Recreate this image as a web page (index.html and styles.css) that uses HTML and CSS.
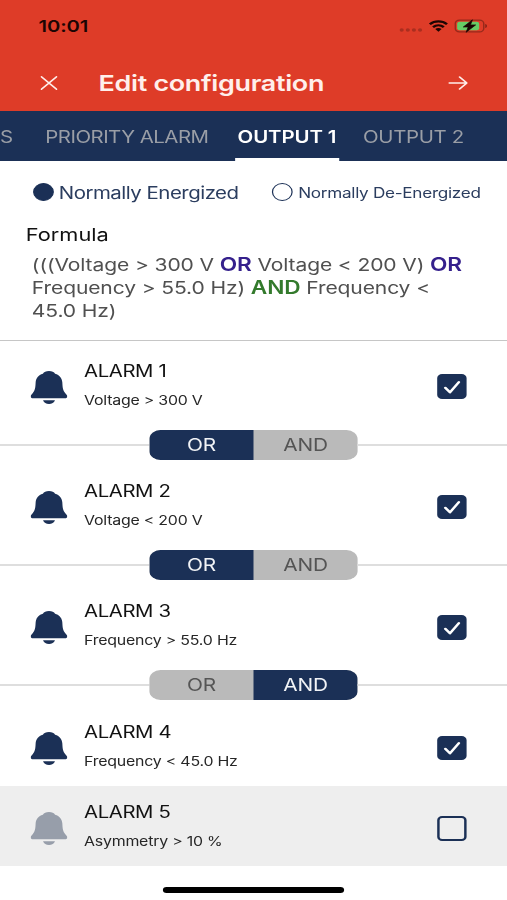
FILE: index.html
```html
<!DOCTYPE html>
<html lang="en">
<head>
<meta charset="utf-8">
<title>Edit configuration</title>
<link rel="stylesheet" href="styles.css">
</head>
<body>
<svg width="0" height="0" class="defs" aria-hidden="true">
  <symbol id="bell" viewBox="0 0 30 33">
    <path d="M15 0C12.600 0 10.900 1 10 2.700C6.400 4 4.300 7 4.100 11.500C3.900 16.500 3.700 19.500 1.500 22.500C.4 24 0 24.600 0 25.500C0 26.700.8 27.300 2 27.300H28C29.200 27.300 30 26.700 30 25.500C30 24.600 29.600 24 28.500 22.500C26.300 19.500 26.100 16.500 25.900 11.500C25.700 7 23.600 4 20 2.700C19.100 1 17.400 0 15 0Z"/>
    <path d="M10.100 29.300H19.900C19 31.800 17.400 33 15 33C12.600 33 11 31.800 10.100 29.300Z"/>
  </symbol>
  <symbol id="tick" viewBox="0 0 24 24">
    <path d="M6.600 12.800L10.400 17.300L17.700 7.200" fill="none" stroke="#fff" stroke-width="2.200" stroke-linecap="round" stroke-linejoin="round"/>
  </symbol>
</svg>
<div class="screen">
  <header class="header">
    <div class="status">
      <span class="time">10:01</span>
      <div class="status-icons">
        <svg class="dots" width="19" height="4" viewBox="0 0 19 4"><circle cx="2" cy="2" r="1.700"/><circle cx="7" cy="2" r="1.700"/><circle cx="12" cy="2" r="1.700"/><circle cx="17" cy="2" r="1.700"/></svg>
        <svg class="wifi" width="16" height="12" viewBox="0 0 16 12"><path d="M1 4.200C5 .5 11 .5 15 4.200M3.600 7.100C6.200 4.800 9.800 4.800 12.400 7.100" fill="none" stroke="#1c0503" stroke-width="2.200"/><path d="M5.400 9C6.900 7.700 9.100 7.700 10.600 9L8 11.700Z" fill="#1c0503"/></svg>
        <svg class="battery" width="27" height="14" viewBox="0 0 27 14"><rect x=".7" y="1.200" width="23.300" height="11.600" rx="3.400" fill="none" stroke="#96291b" stroke-width="1.200"/><path d="M25.300 5V9C27 8.500 27 5.500 25.300 5Z" fill="#7c2116"/><rect x="2.300" y="2.700" width="18" height="8.600" rx="2" fill="#66cc66"/><path d="M14.800.8L7.300 8H11.300L9.600 13.300L17.400 5.900H13.200Z" fill="#170603" stroke="#170603" stroke-width=".6" stroke-linejoin="round"/></svg>
      </div>
    </div>
    <div class="titlebar">
      <svg class="close" width="14" height="14" viewBox="0 0 14 14"><path d="M.8.8L13.200 13.200M13.200.8L.8 13.200"/></svg>
      <h1>Edit configuration</h1>
      <svg class="next" width="16" height="14" viewBox="0 0 16 14"><path d="M.8 7H15M9.300 1L15.200 7L9.300 13"/></svg>
    </div>
  </header>
  <nav class="tabs">
    <span class="tab t0">S</span>
    <span class="tab t1">PRIORITY ALARM</span>
    <span class="tab t2 active">OUTPUT 1</span>
    <span class="tab t3">OUTPUT 2</span>
  </nav>
  <section class="modes">
    <i class="radio on"></i><span class="mode-a">Normally Energized</span>
    <i class="radio"></i><span class="mode-b">Normally De-Energized</span>
  </section>
  <section class="formula">
    <h2>Formula</h2>
    <p>(((Voltage &gt; 300 V <b class="or">OR</b> Voltage &lt; 200 V) <b class="or">OR</b><br>Frequency &gt; 55.0 Hz) <b class="and">AND</b> Frequency &lt;<br>45.0 Hz)</p>
  </section>
  <main class="list">
    <article class="row">
      <svg class="bell"><use href="#bell"/></svg>
      <div class="text"><h3>ALARM 1</h3><small>Voltage &gt; 300 V</small></div>
      <span class="box checked"><svg><use href="#tick"/></svg></span>
    </article>
    <div class="join"><div class="switch"><span class="sel">OR</span><span>AND</span></div></div>
    <article class="row">
      <svg class="bell"><use href="#bell"/></svg>
      <div class="text"><h3>ALARM 2</h3><small>Voltage &lt; 200 V</small></div>
      <span class="box checked"><svg><use href="#tick"/></svg></span>
    </article>
    <div class="join"><div class="switch"><span class="sel">OR</span><span>AND</span></div></div>
    <article class="row">
      <svg class="bell"><use href="#bell"/></svg>
      <div class="text"><h3>ALARM 3</h3><small>Frequency &gt; 55.0 Hz</small></div>
      <span class="box checked"><svg><use href="#tick"/></svg></span>
    </article>
    <div class="join"><div class="switch"><span>OR</span><span class="sel">AND</span></div></div>
    <article class="row">
      <svg class="bell"><use href="#bell"/></svg>
      <div class="text"><h3>ALARM 4</h3><small>Frequency &lt; 45.0 Hz</small></div>
      <span class="box checked"><svg><use href="#tick"/></svg></span>
    </article>
    <article class="row off">
      <svg class="bell"><use href="#bell"/></svg>
      <div class="text"><h3>ALARM 5</h3><small>Asymmetry &gt; 10 %</small></div>
      <span class="box"></span>
    </article>
  </main>
  <footer class="home"><i></i></footer>
</div>
</body>
</html>
```
FILE: styles.css
```css
* { box-sizing: border-box; margin: 0; padding: 0; }
html, body { width: 507px; height: 900px; overflow: hidden; background: #fff; }
.defs { display: none; }
svg { display: block; flex: none; }

/* 414pt wide phone layout, stretched to the window width */
.screen {
  width: 414px; height: 900px;
  display: flex; flex-direction: column;
  transform: scaleX(1.22464); transform-origin: 0 0;
  font-family: Inter, "Liberation Sans", sans-serif;
  color: #111; white-space: nowrap;
}

.header { height: 111px; background: #de3c28; flex: none; }
.status { height: 52px; padding: 0 16px 0 31.500px; display: flex; align-items: center; justify-content: space-between; }
.time { font-size: 16.500px; font-weight: 600; letter-spacing: -.1px; color: #1c0503; }
.status-icons { display: flex; align-items: center; }
.dots { fill: #aa2e1f; margin: 7px 5.500px 0 0; }
.wifi { margin-right: 5px; }
.titlebar { height: 62px; padding: 0 32px 0 33px; display: flex; align-items: center; }
.titlebar path { fill: none; stroke: #ffeeea; stroke-width: 1.500; stroke-linecap: round; stroke-linejoin: round; }
h1 { margin-left: 33.500px; flex: 1; font-size: 22px; font-weight: 600; letter-spacing: -.270px; color: #ffefeb; }

.tabs { height: 50px; flex: none; background: #1b3056; display: flex; font-size: 16.700px; line-height: 52px; color: #9a9ea6; }
.tab { flex: none; height: 50px; }
.t0 { width: 11px; margin-right: 26px; }
.t1 { width: 134px; margin-right: 21px; letter-spacing: -.430px; }
.t2 { width: 84.500px; margin-right: 20px; padding-left: 2px; letter-spacing: -.100px; }
.t3 { letter-spacing: -.300px; }
.active { color: #fff; font-weight: 600; border-bottom: 3px solid #fff; }

.modes { height: 62px; flex: none; padding-left: 26.500px; display: flex; align-items: center; color: #2b3d5f; }
.radio { width: 17px; height: 18px; border: 1.500px solid #1b3056; border-radius: 50%; flex: none; }
.radio.on { background: #1b3056; }
.mode-a { width: 178.500px; padding: 1px 0 0 4.500px; font-size: 16.700px; letter-spacing: -.410px; }
.mode-b { padding-left: 4.500px; font-size: 14px; letter-spacing: -.240px; }

.formula { height: 118px; flex: none; padding: 0 0 0 21px; border-bottom: 1.500px solid #c6c6c6; }
h2 { font-size: 17.800px; font-weight: 400; line-height: 23px; }
.formula p { padding-left: 5px; margin-top: 6.500px; font-size: 17.200px; letter-spacing: -.100px; line-height: 23px; color: #505050; }
.formula b { font-weight: 600; font-size: 18.500px; line-height: 1; }
.or { color: #35208c; }
.and { color: #337a2c; }

.list { flex: none; padding-top: 2.900px; }
.row { height: 80.450px; display: flex; align-items: center; padding: 5px 32.800px 0 24.700px; }
.bell { width: 30px; height: 33px; margin-top: 1px; fill: #1b3056; }
.text { margin-left: 13.900px; flex: 1; padding-bottom: 3px; }
h3 { font-size: 16.600px; font-weight: 400; letter-spacing: -.300px; line-height: 29px; }
small { display: block; font-size: 13px; letter-spacing: -.180px; line-height: 28px; color: #262626; }
.box { width: 24.600px; height: 24.500px; border: 2px solid #1b3056; border-radius: 4px; flex: none; }
.checked { background: #1b3056; }
.checked svg { width: 24px; height: 24px; margin: -1.700px; }
.off { background: #eee; }
.off .bell { fill: #979eaa; }
.join { height: 40px; padding-top: .4px; display: flex; align-items: center; justify-content: center; }
.join::before, .join::after { content: ""; flex: 1; height: 2px; background: #dedede; }
.switch { width: 170px; height: 30px; display: flex; border-radius: 9px; overflow: hidden; background: #bababa; }
.switch span { flex: 1; text-align: center; line-height: 31px; font-size: 17px; letter-spacing: -.200px; color: #555; }
.switch .sel { background: #1b3056; color: #f1f3f6; }

.home { flex: 1; display: flex; justify-content: center; padding-top: 21px; }
.home i { width: 147.500px; height: 5.500px; border-radius: 3px; background: #000; }
```
